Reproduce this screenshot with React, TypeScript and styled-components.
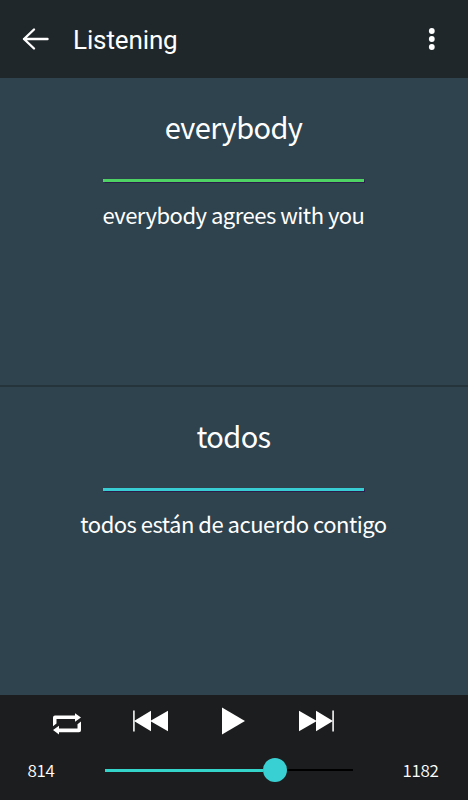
import React from "react";
import styled, { createGlobalStyle } from "styled-components";

const GlobalStyle = createGlobalStyle`
  * { box-sizing: border-box; }
  body { margin: 0; background: #1c1d1e; }
  button { padding: 0; border: 0; background: none; color: inherit; }
  svg { display: block; }
`;

const Screen = styled.main`
  width: 468px;
  height: 800px;
  display: flex;
  flex-direction: column;
  overflow: hidden;
  color: #fff;
  background: #2f434e;
  font-family: "Noto Sans CJK SC", "Noto Sans", sans-serif;
`;

const Header = styled.header`
  height: 78px;
  flex: none;
  display: flex;
  align-items: center;
  padding: 0 28px 0 22px;
  background: #1f272a;
`;

const Title = styled.h1`
  flex: 1;
  margin: 2px 0 0 24px;
  font: 400 26px/32px Roboto, sans-serif;
  letter-spacing: -0.12px;
`;

const Card = styled.section<{ $divided?: boolean }>`
  height: ${(p) => (p.$divided ? 309 : 308)}px;
  flex: none;
  display: flex;
  flex-direction: column;
  align-items: center;
  padding: 26px 1px 0 0;
  border-bottom: ${(p) => (p.$divided ? "2px solid #25333b" : "0")};
`;

const Word = styled.h2`
  margin: 0;
  font-size: 29px;
  font-weight: 400;
  letter-spacing: -0.6px;
  line-height: 44px;
`;

const Rule = styled.div<{ $color: string }>`
  width: 261px;
  height: 3px;
  margin: 31px 0 16px;
  background: ${(p) => p.$color};
  box-shadow: 0 0 1px 0.5px #2c1c4c;
`;

const Phrase = styled.p`
  margin: 0;
  font-size: 22px;
  font-weight: 400;
  letter-spacing: -0.5px;
  line-height: 32px;
  white-space: nowrap;
`;

const Player = styled.footer`
  flex: 1;
  background: #1c1d1e;
`;

const Controls = styled.div`
  height: 52px;
  display: flex;
  align-items: center;
  padding-left: 52px;
`;

const Control = styled.button<{ $gap?: number; $drop?: number }>`
  margin: ${(p) => p.$drop ?? 0}px 0 0 ${(p) => p.$gap ?? 0}px;
`;

const Progress = styled.div`
  height: 46px;
  display: grid;
  grid-template-columns: 105px 248px 1fr;
  align-items: center;
`;

const Count = styled.span<{ $inset: number }>`
  padding-left: ${(p) => p.$inset}px;
  font-size: 17px;
  font-weight: 350;
  letter-spacing: -0.35px;
  line-height: 24px;
`;

const Track = styled.div`
  height: 24px;
  display: flex;
  align-items: center;
`;

const Played = styled.div`
  height: 3px;
  background: #35d4cb;
`;

const Thumb = styled.div`
  width: 24px;
  height: 24px;
  flex: none;
  border-radius: 50%;
  background: #39d0d3;
`;

const Remaining = styled.div`
  height: 2px;
  flex: 1;
  background: #000;
`;

const BackIcon = () => (
  <svg width="27" height="24" viewBox="0 0 27 24" fill="none" stroke="#fff" strokeWidth="2.4" strokeLinecap="round" strokeLinejoin="round">
    <path d="M25.5 12H2M12 2.5L2 12l10 9.5" />
  </svg>
);

const MoreIcon = () => (
  <svg width="16" height="24" viewBox="0 0 16 24" fill="#fff">
    <circle cx="7.8" cy="4" r="2.9" />
    <circle cx="7.8" cy="12" r="2.9" />
    <circle cx="7.8" cy="20" r="2.9" />
  </svg>
);

const RepeatIcon = () => (
  <svg width="30" height="22" viewBox="0 0 30 22" fill="#fff">
    <path d="M1 13.2V4.5Q1 2.6 3 2.6H23V.2L29 4.5l-6 4.2V6H4.5v4.4z" />
    <path d="M29 8.4v8.8q0 2-2 2H7v2.4L1 17l6-4.2v2.8h18.5v-4.4z" />
  </svg>
);

const SkipIcon = ({ forward = false }) => (
  <svg width="36" height="24" viewBox="0 0 36 24" fill="#fff">
    <g transform={forward ? "translate(36 0) scale(-1 1)" : undefined}>
      <path fill="#ddd" d="M1 1.5h1.8v21H1z" />
      <path d="M2 12L19 1.8v9.6L36 1.8v20.4l-17-9.6v9.6z" />
    </g>
  </svg>
);

const PlayIcon = () => (
  <svg width="24" height="28" viewBox="0 0 24 28" fill="#fff">
    <path d="M0 .5L23 14 0 27.5z" />
  </svg>
);

export default function App() {
  const current = 814;
  const total = 1182;

  return (
    <>
      <GlobalStyle />
      <Screen>
        <Header>
          <Control aria-label="Back"><BackIcon /></Control>
          <Title>Listening</Title>
          <Control aria-label="More options"><MoreIcon /></Control>
        </Header>
        <Card $divided>
          <Word>everybody</Word>
          <Rule $color="#4ed263" />
          <Phrase>everybody agrees with you</Phrase>
        </Card>
        <Card>
          <Word>todos</Word>
          <Rule $color="#38cdd2" />
          <Phrase>todos están de acuerdo contigo</Phrase>
        </Card>
        <Player>
          <Controls>
            <Control aria-label="Repeat" $drop={6}><RepeatIcon /></Control>
            <Control aria-label="Previous" $gap={50}><SkipIcon /></Control>
            <Control aria-label="Play" $gap={54}><PlayIcon /></Control>
            <Control aria-label="Next" $gap={53}><SkipIcon forward /></Control>
          </Controls>
          <Progress>
            <Count $inset={27.5}>{current}</Count>
            <Track>
              <Played style={{ width: `${((current / total) * 248) - 12.4}px` }} />
              <Thumb />
              <Remaining />
            </Track>
            <Count $inset={49.5}>{total}</Count>
          </Progress>
        </Player>
      </Screen>
    </>
  );
}
